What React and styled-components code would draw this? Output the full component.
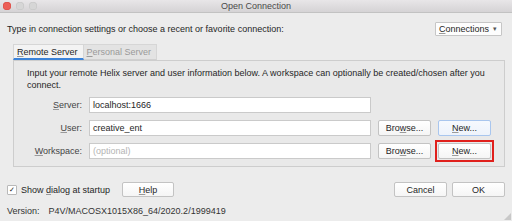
import React from "react";
import styled, { createGlobalStyle } from "styled-components";

const GlobalStyle = createGlobalStyle`
  html, body {
    margin: 0;
    padding: 0;
    background: #ececec;
  }
  body {
    font-family: "Liberation Sans", Arial, sans-serif;
    font-size: 9px;
    color: #262626;
    overflow: hidden;
  }
`;

const rows = [
  { label: "Server:", key: "S", rest: "erver:", value: "localhost:1666", buttons: false },
  { label: "User:", key: "U", rest: "ser:", value: "creative_ent", buttons: true, focused: true },
  { label: "Workspace:", key: "W", rest: "orkspace:", placeholder: "(optional)", buttons: true, marked: true }
];

const Mn = ({ k, rest, pre = "" }) => (
  <span>
    {pre}
    <u>{k}</u>
    {rest}
  </span>
);

const App = () => {
  return (
    <Dialog>
      <GlobalStyle />
      <TitleBar>
        <Lights>
          <Light color="#ec5f57" edge="#d9463f" />
          <Light color="#d6d6d6" edge="#c4c4c4" />
          <Light color="#d6d6d6" edge="#c4c4c4" />
        </Lights>
        <Title>Open Connection</Title>
      </TitleBar>

      <Body>
        <HeaderRow>
          <span>Type in connection settings or choose a recent or favorite connection:</span>
          <DropButton>
            <Mn k="C" rest="onnections" />
            <Caret>▾</Caret>
          </DropButton>
        </HeaderRow>

        <Tabs>
          <Tab active>
            <Mn k="R" rest="emote Server" />
          </Tab>
          <Tab>
            <Mn k="P" rest="ersonal Server" />
          </Tab>
        </Tabs>

        <Panel>
          <Intro>
            Input your remote Helix server and user information below. A workspace can optionally be created/chosen after you
            connect.
          </Intro>
          <Form>
            {rows.map((row) => (
              <React.Fragment key={row.label}>
                <Label>
                  <Mn k={row.key} rest={row.rest} />
                </Label>
                <Field placeholder={!row.value}>{row.value || row.placeholder}</Field>
                {row.buttons ? (
                  <>
                    <Button>
                      <Mn pre="Bro" k="w" rest="se..." />
                    </Button>
                    {row.marked ? (
                      <Highlight>
                        <Button>
                          <Mn k="N" rest="ew..." />
                        </Button>
                      </Highlight>
                    ) : (
                      <Button focused={row.focused}>
                        <Mn k="N" rest="ew..." />
                      </Button>
                    )}
                  </>
                ) : (
                  <>
                    <span />
                    <span />
                  </>
                )}
              </React.Fragment>
            ))}
          </Form>
        </Panel>

        <Footer>
          <CheckLabel>
            <CheckBox>✓</CheckBox>
            <Mn pre="Show " k="d" rest="ialog at startup" />
          </CheckLabel>
          <Button wide small>
            <Mn k="H" rest="elp" />
          </Button>
          <Spacer />
          <Button small>Cancel</Button>
          <Button small>OK</Button>
        </Footer>

        <Version>
          <span>Version:</span>
          <span>P4V/MACOSX1015X86_64/2020.2/1999419</span>
        </Version>
      </Body>
      <Grip />
    </Dialog>
  );
};

export default App;

const Dialog = styled.div`
  position: relative;
  width: 512px;
  height: 221px;
  background: #ececec;
  overflow: hidden;

  u {
    text-decoration: underline;
    text-decoration-color: #9a9a9a;
    text-underline-offset: 1px;
  }
`;

const TitleBar = styled.div`
  position: relative;
  display: flex;
  align-items: center;
  justify-content: center;
  height: 12px;
  background: linear-gradient(#e8e6e8, #d5d3d5);
  border-bottom: 1px solid #c2c2c2;
`;

const Lights = styled.div`
  position: absolute;
  left: 3px;
  top: 2px;
  display: flex;
  gap: 5px;
`;

const Light = styled.span`
  width: 8px;
  height: 8px;
  border-radius: 50%;
  background: ${({ color }) => color};
  box-shadow: inset 0 0 0 0.5px ${({ edge }) => edge};
`;

const Title = styled.div`
  color: #4a4a4a;
  font-size: 9px;
  line-height: 12px;
`;

const Body = styled.div`
  padding: 0 7px;
`;

const HeaderRow = styled.div`
  display: flex;
  align-items: center;
  justify-content: space-between;
  height: 14px;
  margin-top: 9px;
  padding-right: 3px;
`;

const DropButton = styled.div`
  display: flex;
  align-items: center;
  gap: 4px;
  height: 12px;
  padding: 0 4px 0 3px;
  background: #fdfdfd;
  border: 1px solid #c6c6c6;
  border-radius: 1px;
  color: #262626;
`;

const Caret = styled.span`
  font-size: 7px;
  color: #555;
`;

const Tabs = styled.div`
  display: flex;
  margin: 8px 0 0 6px;
  height: 16px;
`;

const Tab = styled.div`
  display: flex;
  align-items: center;
  box-sizing: border-box;
  height: 16px;
  padding: 0 5px 0 3px;
  background: ${({ active }) => (active ? "#f3f3f3" : "#e3e3e3")};
  border: 1px solid #d6d6d6;
  border-bottom: ${({ active }) => (active ? "2px solid #3b83d8" : "1px solid #d0d0d0")};
  border-left: ${({ active }) => (active ? "1px solid #d6d6d6" : "none")};
  color: ${({ active }) => (active ? "#262626" : "#9a9a9a")};
  white-space: nowrap;
`;

const Panel = styled.div`
  margin: 0 0 0 6px;
  height: 107px;
  box-sizing: border-box;
  padding: 6px 13px 8px 13px;
  background: #e9e9e9;
  border: 1px solid #cdcdcd;
`;

const Intro = styled.div`
  line-height: 12px;
  color: #262626;
`;

const Form = styled.div`
  display: grid;
  grid-template-columns: 55px 1fr 53px 53px;
  grid-auto-rows: 16px;
  column-gap: 7px;
  row-gap: 7px;
  margin-top: 6px;
  align-items: center;
`;

const Label = styled.div`
  text-align: right;
  color: #444;
`;

const Field = styled.div`
  display: flex;
  align-items: center;
  height: 16px;
  box-sizing: border-box;
  padding: 0 3px;
  background: #fff;
  border: 1px solid #cacaca;
  color: ${({ placeholder }) => (placeholder ? "#b4b4b4" : "#262626")};
`;

const Button = styled.div`
  display: flex;
  align-items: center;
  justify-content: center;
  height: ${({ small }) => (small ? "15px" : "16px")};
  width: ${({ wide }) => (wide ? "52px" : "53px")};
  box-sizing: border-box;
  background: ${({ focused }) => (focused ? "linear-gradient(#f6f9fe, #eef3fb)" : "linear-gradient(#ffffff, #f5f5f5)")};
  border: 1px solid ${({ focused }) => (focused ? "#a9c6ee" : "#c3c3c3")};
  border-radius: 2px;
  color: #262626;
  white-space: nowrap;
`;

const Highlight = styled.div`
  margin: -3px;
  padding: 1px;
  border: 2px solid #e0201c;
`;

const Footer = styled.div`
  display: flex;
  align-items: center;
  height: 15px;
  margin-top: 15px;
  gap: 5px;

  & > :nth-child(2) {
    margin-left: 7px;
  }
`;

const CheckLabel = styled.div`
  display: flex;
  align-items: center;
  gap: 4px;
  color: #262626;
`;

const CheckBox = styled.span`
  display: flex;
  align-items: center;
  justify-content: center;
  width: 8px;
  height: 8px;
  background: #fff;
  border: 1px solid #b9b9b9;
  border-radius: 1px;
  font-size: 7px;
  line-height: 8px;
  color: #222;
`;

const Spacer = styled.div`
  flex: 1;
`;

const Version = styled.div`
  display: flex;
  gap: 9px;
  margin-top: 8px;
  line-height: 12px;
  color: #333;
`;

const Grip = styled.div`
  position: absolute;
  right: 1px;
  bottom: 1px;
  width: 7px;
  height: 7px;
  background: radial-gradient(circle, #b5b5b5 0.6px, transparent 0.9px) 0 0 / 2px 2px;
  clip-path: polygon(100% 0, 100% 100%, 0 100%);
`;
